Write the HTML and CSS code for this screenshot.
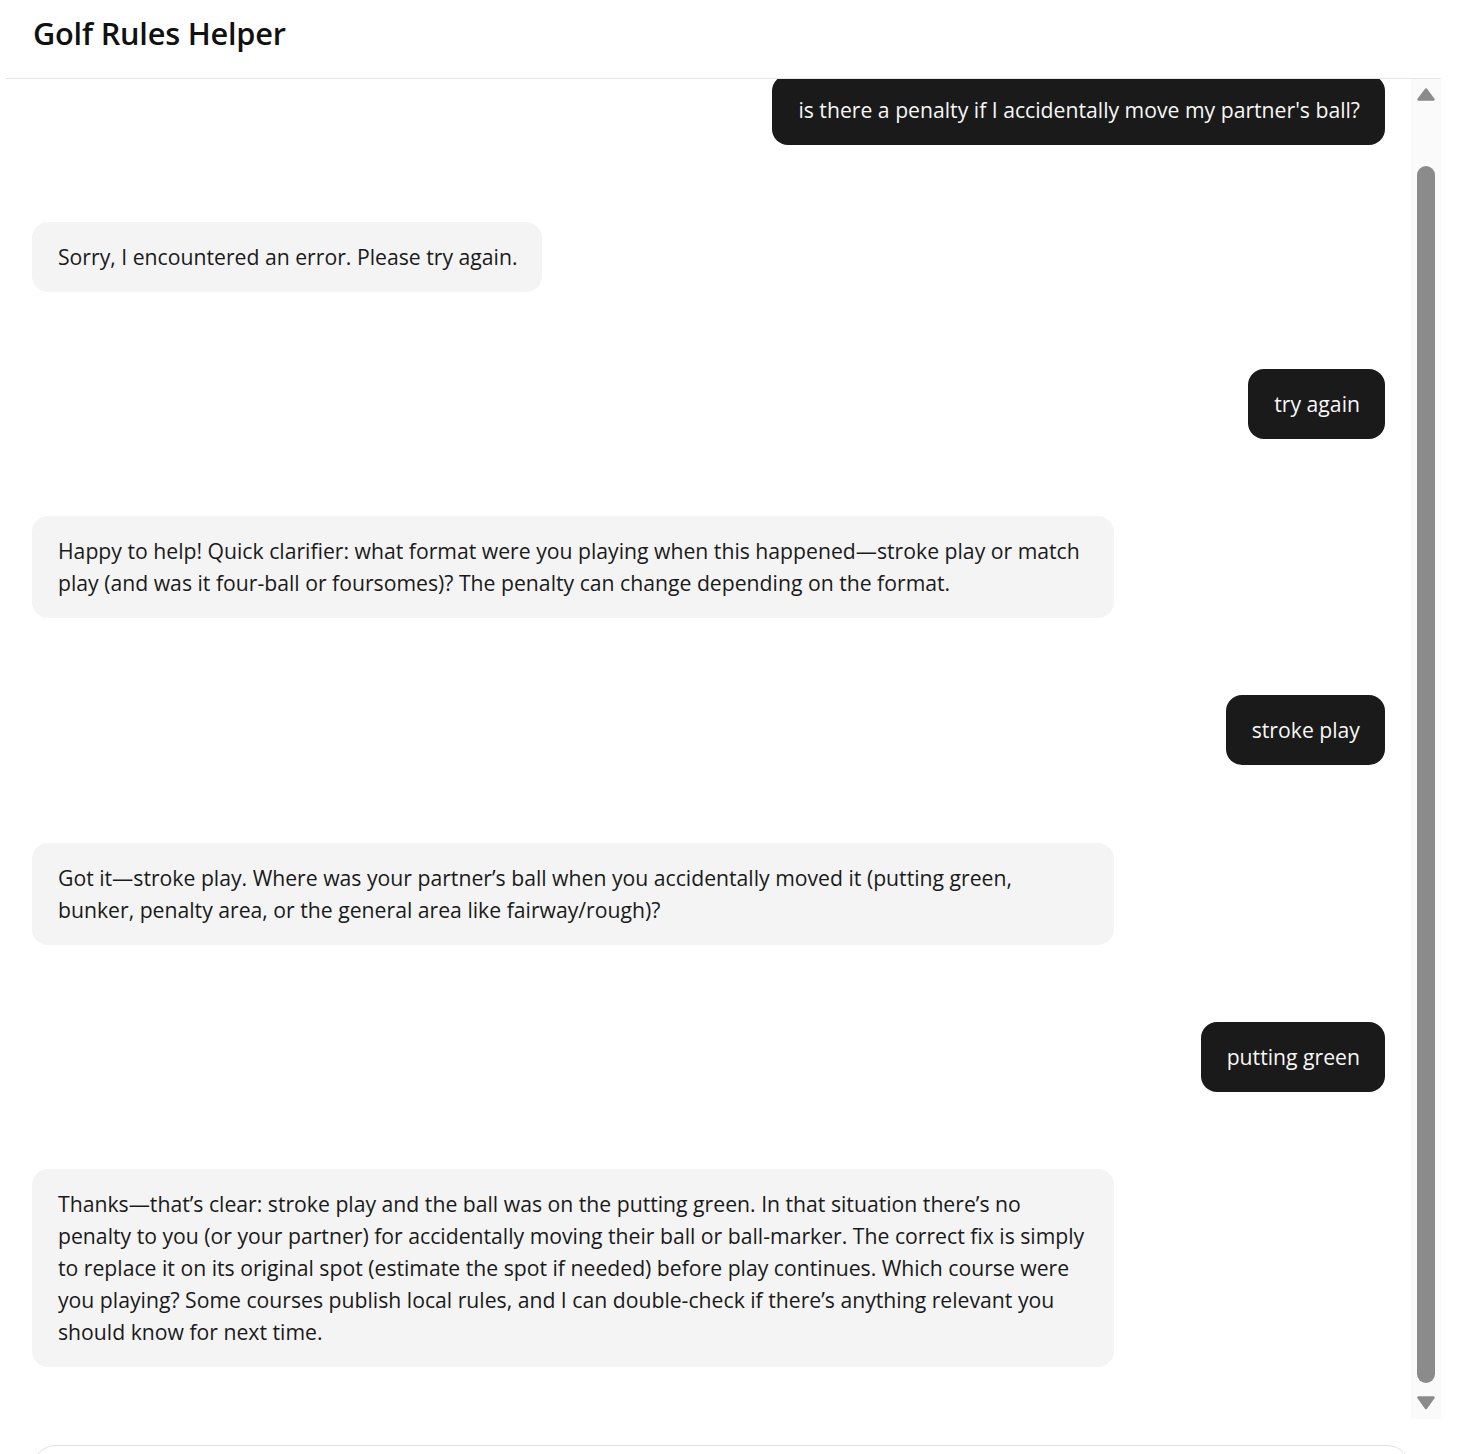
FILE: index.html
```html
<!DOCTYPE html>
<html lang="en">
<head>
<meta charset="utf-8">
<title>Golf Rules Helper</title>
<link rel="stylesheet" href="styles.css">
</head>
<body>
<div class="app">
  <header class="app-header">
    <h1 class="app-title">Golf Rules Helper</h1>
  </header>
  <main class="chat">
    <div class="messages">
      <div class="msg msg-user"><div class="bubble">is there a penalty if I accidentally move my partner's ball?</div></div>
      <div class="msg msg-bot"><div class="bubble">Sorry, I encountered an error. Please try again.</div></div>
      <div class="msg msg-user"><div class="bubble">try again</div></div>
      <div class="msg msg-bot"><div class="bubble">Happy to help! Quick clarifier: what format were you playing when this happened—stroke play or match play (and was it four-ball or foursomes)? The penalty can change depending on the format.</div></div>
      <div class="msg msg-user"><div class="bubble">stroke play</div></div>
      <div class="msg msg-bot"><div class="bubble">Got it—stroke play. Where was your partner’s ball when you accidentally moved it (putting green, bunker, penalty area, or the general area like fairway/rough)?</div></div>
      <div class="msg msg-user"><div class="bubble">putting green</div></div>
      <div class="msg msg-bot"><div class="bubble">Thanks—that’s clear: stroke play and the ball was on the putting green. In that situation there’s no penalty to you (or your partner) for accidentally moving their ball or ball-marker. The correct fix is simply to replace it on its original spot (estimate the spot if needed) before play continues. Which course were you playing? Some courses publish local rules, and I can double-check if there’s anything relevant you should know for next time.</div></div>
    </div>
    <div class="scrollbar" aria-hidden="true">
      <svg class="sb-arrow sb-up" width="18" height="13" viewBox="0 0 18 13"><polygon points="9,1.5 16.5,11.5 1.5,11.5" fill="#8b8b8b" stroke="#8b8b8b" stroke-width="2.5" stroke-linejoin="round"/></svg>
      <div class="sb-thumb"></div>
      <svg class="sb-arrow sb-down" width="18" height="14" viewBox="0 0 18 14"><polygon points="1.5,1.5 16.5,1.5 9,12" fill="#8b8b8b" stroke="#8b8b8b" stroke-width="2.5" stroke-linejoin="round"/></svg>
    </div>
  </main>
  <footer class="composer">
    <div class="input-box"></div>
  </footer>
</div>
</body>
</html>
```
FILE: styles.css
```css
html, body {
  margin: 0;
  padding: 0;
  height: 100%;
  overflow: hidden;
  background: #ffffff;
}

body {
  font-family: "Open Sans", "Noto Sans", sans-serif;
  color: #1a1a1a;
}

.app {
  margin-left: 6px;
  width: 1435px;
  display: flex;
  flex-direction: column;
}

.app-header {
  height: 79px;
  border-bottom: 1px solid #e5e5e5;
  display: flex;
  align-items: center;
  padding: 0 27px;
  box-sizing: border-box;
}

.app-title {
  margin: 0 0 13px 0;
  font-size: 30.7px;
  font-weight: 600;
  color: #111111;
  letter-spacing: -0.2px;
}

.chat {
  height: 1340px;
  display: flex;
}

.messages {
  flex: 1;
  overflow: hidden;
  display: flex;
  flex-direction: column;
  justify-content: flex-end;
  gap: 77.2px;
  padding: 0 26px 52px 26px;
}

.msg {
  display: flex;
  flex-shrink: 0;
}

.msg-user {
  justify-content: flex-end;
}

.msg-bot {
  justify-content: flex-start;
}

.bubble {
  max-width: 80%;
  box-sizing: border-box;
  padding: 19px 25px 19px 26px;
  border-radius: 16px;
  font-size: 21.2px;
  line-height: 32px;
}

.msg-user .bubble {
  background: #1a1a1a;
  color: #f7f7f7;
}

.msg-bot .bubble {
  background: #f4f4f4;
  color: #1a1a1a;
}

.scrollbar {
  width: 30px;
  background: #fafafa;
  display: flex;
  flex-direction: column;
  align-items: center;
  padding: 9px 0;
  box-sizing: border-box;
}

.sb-arrow {
  display: block;
  flex-shrink: 0;
}

.sb-thumb {
  width: 18px;
  height: 1217px;
  margin-top: 65px;
  border-radius: 9px;
  background: #8b8b8b;
  flex-shrink: 0;
}

.sb-down {
  margin-top: 13px;
}

.composer {
  padding: 26px 30px 0 26px;
}

.input-box {
  height: 80px;
  border: 1px solid #e2e2e2;
  border-radius: 24px;
}
```
